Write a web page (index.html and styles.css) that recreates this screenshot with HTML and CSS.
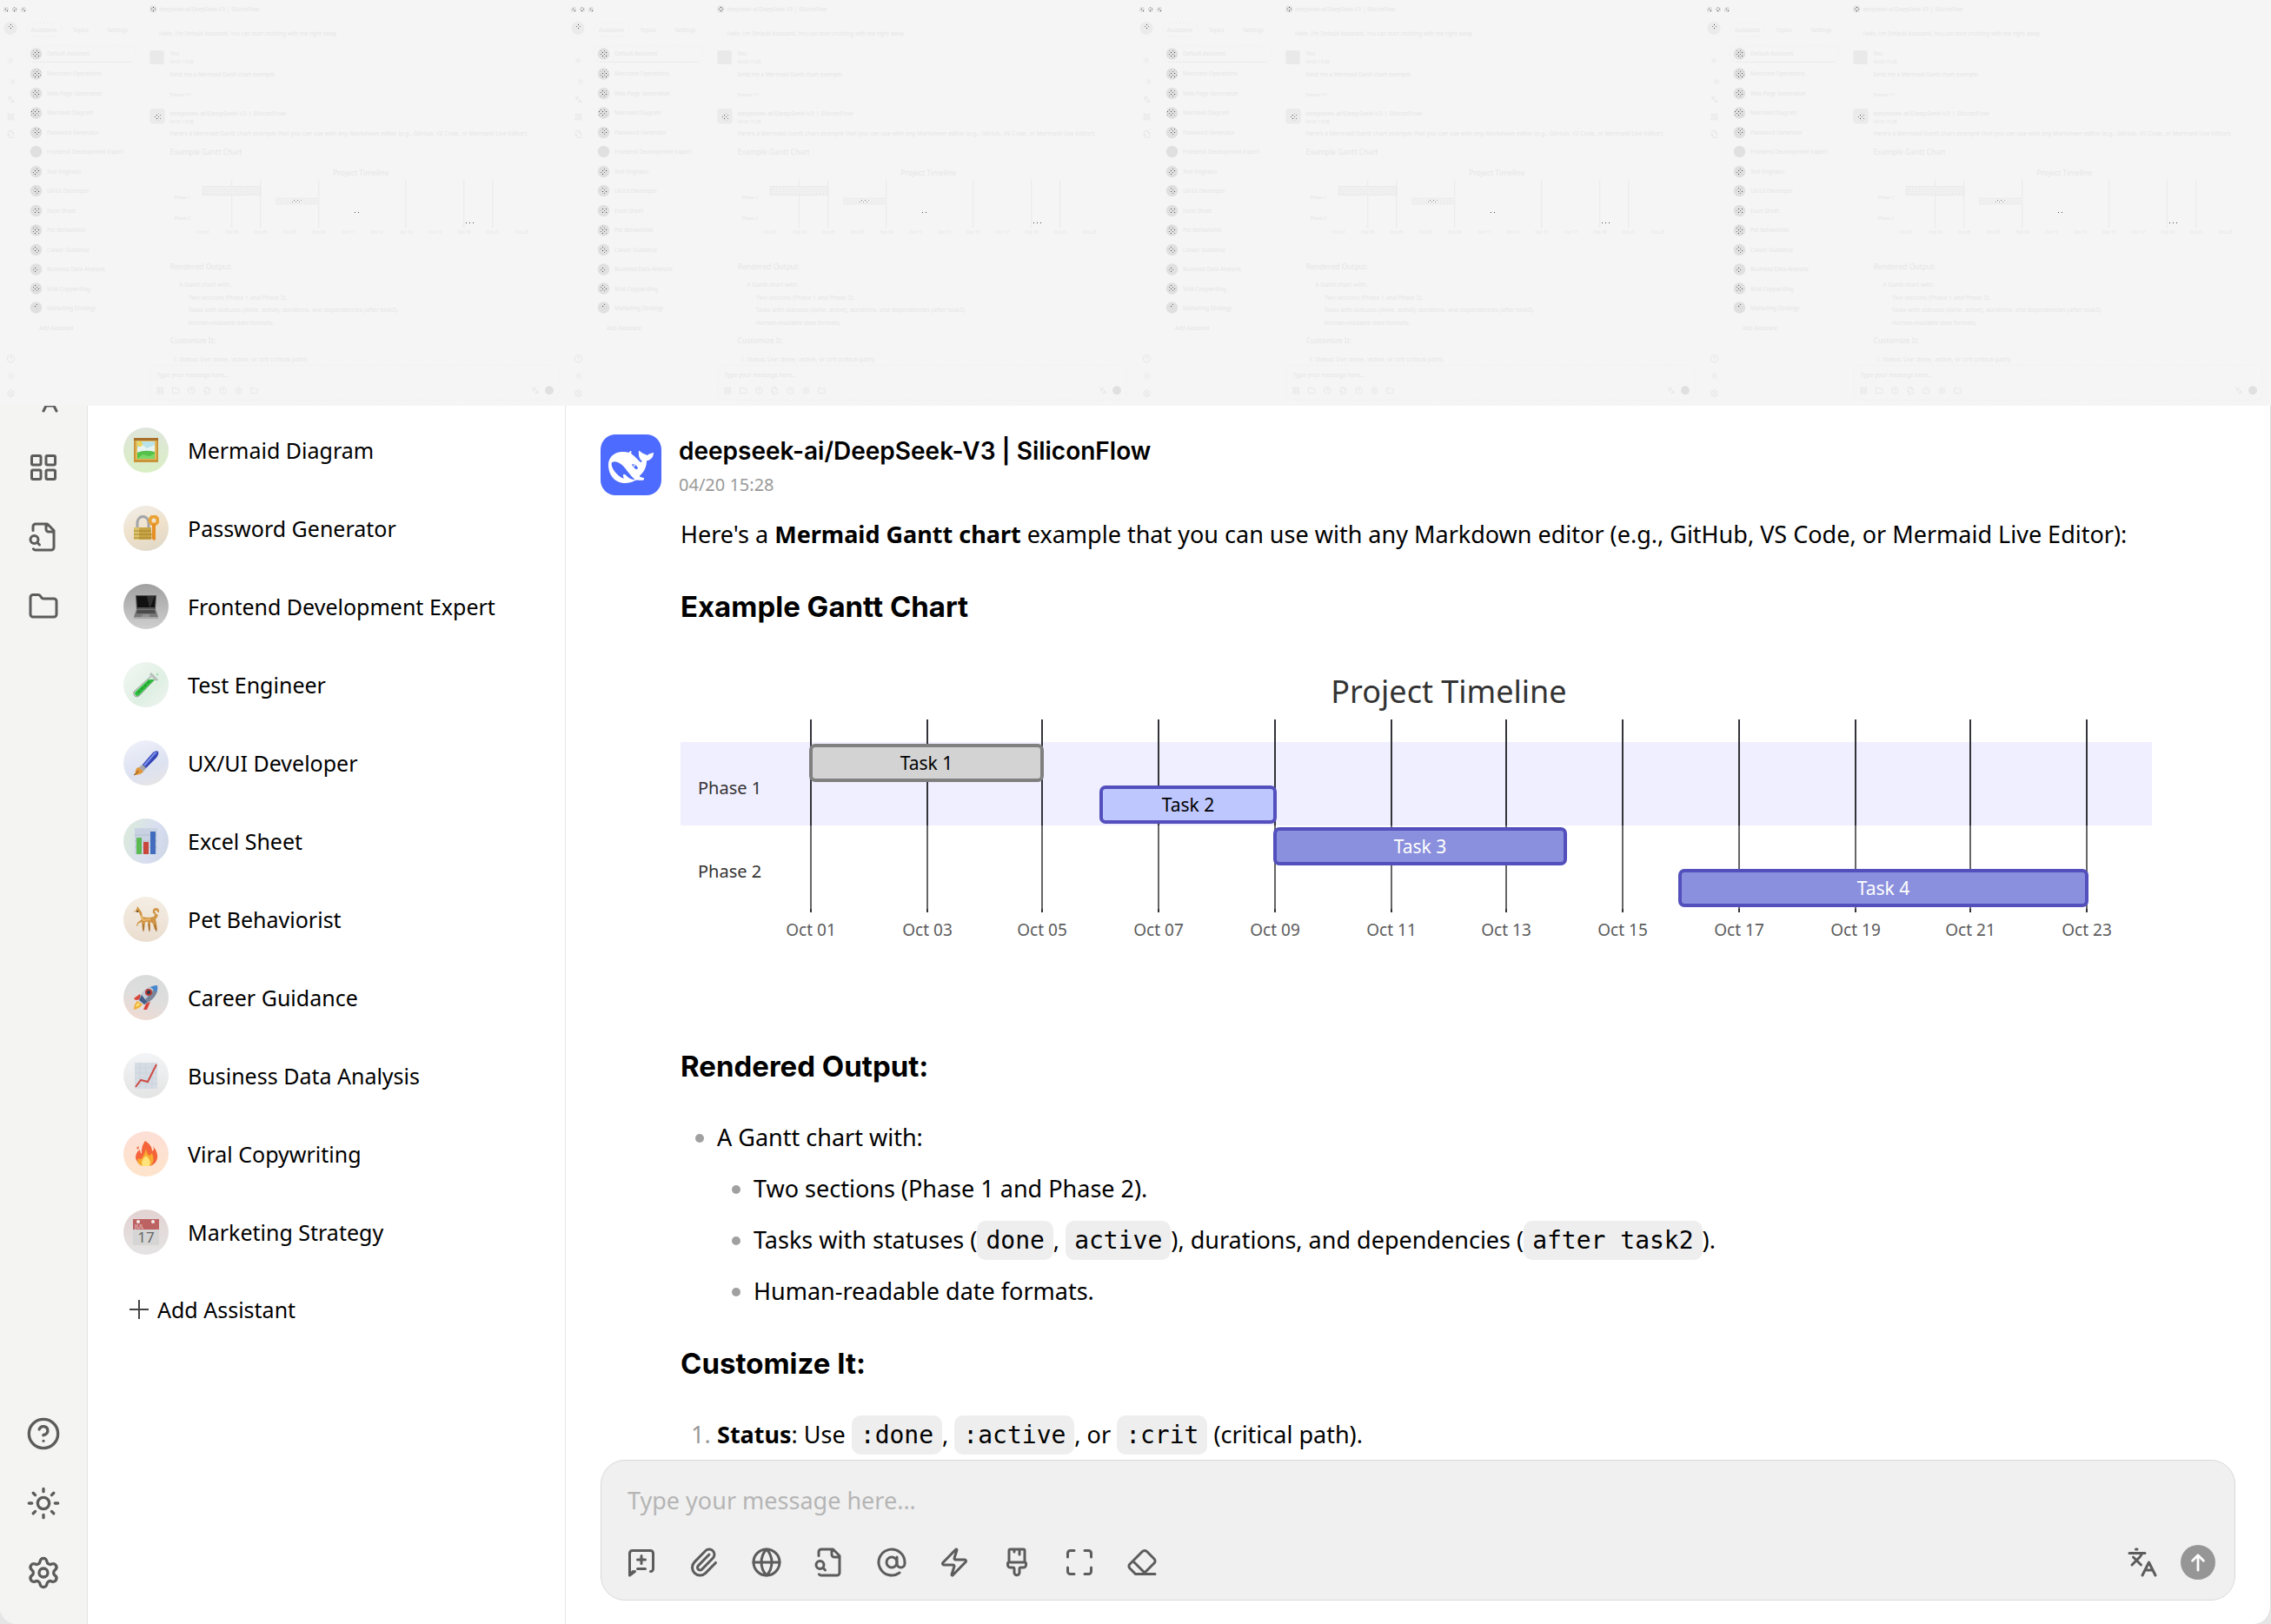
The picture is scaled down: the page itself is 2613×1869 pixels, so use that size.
FILE: index.html
```html
<!DOCTYPE html>
<html lang="en">
<head>
    <meta charset="UTF-8">
    <meta name="viewport" content="width=device-width, initial-scale=1.0">
    <title>Assistants</title>
    <link rel="stylesheet" href="styles.css">
</head>
<body>

    <!-- shared icons -->
    <svg class="defs" aria-hidden="true">
        <defs>
            <pattern id="dots" width="16" height="16" patternUnits="userSpaceOnUse">
                <rect width="4" height="4" fill="#444" shape-rendering="crispEdges"/>
                <rect x="8" y="8" width="4" height="4" fill="#777" shape-rendering="crispEdges"/>
            </pattern>
            <pattern id="mesh" width="16" height="16" patternUnits="userSpaceOnUse">
                <rect width="16" height="16" fill="#f1f1f1"/>
                <rect width="4" height="4" fill="#e2e2e2"/>
                <rect x="8" y="8" width="4" height="4" fill="#e2e2e2"/>
            </pattern>
        </defs>
        <symbol id="i-translate" viewBox="0 0 24 24"><path d="m5 8 6 6M4 14l6-6 2-3M2 5h12M7 2h1M22 22l-5-10-5 10M14 18h6"/></symbol>
        <symbol id="i-grid" viewBox="0 0 24 24"><rect x="3" y="3" width="7" height="7" rx="1"/><rect x="14" y="3" width="7" height="7" rx="1"/><rect x="14" y="14" width="7" height="7" rx="1"/><rect x="3" y="14" width="7" height="7" rx="1"/></symbol>
        <symbol id="i-filesearch" viewBox="0 0 24 24"><path d="M14 2v4a2 2 0 0 0 2 2h4M4.3 21.2A2 2 0 0 0 6 22h12a2 2 0 0 0 2-2V7l-5-5H6a2 2 0 0 0-2 2v3M9 18l-1.5-1.5"/><circle cx="5" cy="14" r="3"/></symbol>
        <symbol id="i-folder" viewBox="0 0 24 24"><path d="M20 20a2 2 0 0 0 2-2V8a2 2 0 0 0-2-2h-7.900a2 2 0 0 1-1.690-.900L9.600 3.900A2 2 0 0 0 7.930 3H4a2 2 0 0 0-2 2v13a2 2 0 0 0 2 2Z"/></symbol>
        <symbol id="i-help" viewBox="0 0 24 24"><circle cx="12" cy="12" r="10"/><path d="M9.090 9a3 3 0 0 1 5.830 1c0 2-3 3-3 3M12 17h.01"/></symbol>
        <symbol id="i-sun" viewBox="0 0 24 24"><circle cx="12" cy="12" r="4"/><path d="M12 2v2M12 20v2M4.930 4.930l1.410 1.410M17.660 17.660l1.410 1.410M2 12h2M20 12h2M6.340 17.660l-1.410 1.410M19.070 4.930l-1.410 1.410"/></symbol>
        <symbol id="i-gear" viewBox="0 0 24 24"><path d="M9.670 4.140a2.340 2.340 0 0 1 4.660 0 2.340 2.340 0 0 0 3.320 1.910 2.340 2.340 0 0 1 2.330 4.030 2.340 2.340 0 0 0 0 3.840 2.340 2.340 0 0 1-2.330 4.030 2.340 2.340 0 0 0-3.320 1.910 2.340 2.340 0 0 1-4.660 0 2.340 2.340 0 0 0-3.320-1.910 2.340 2.340 0 0 1-2.330-4.030 2.340 2.340 0 0 0 0-3.840 2.340 2.340 0 0 1 2.330-4.030 2.340 2.340 0 0 0 3.320-1.910"/><circle cx="12" cy="12" r="3"/></symbol>
    </svg>

    <!-- the window is drawn once at full size and scaled down by the viewBox -->
    <header class="ghosts" aria-hidden="true">
        <svg class="ghost" viewBox="0 0 2613 1869"><g id="ghost">
            <g fill="#e0e0e0">
                <circle cx="28" cy="44" r="12"/><circle cx="68" cy="44" r="12"/><circle cx="108" cy="44" r="12"/>
                <circle cx="48" cy="130" r="30" fill="#ebebeb"/>
                <circle cx="705" cy="42" r="16"/>
                <circle cx="166" cy="248" r="27"/><circle cx="166" cy="340" r="27"/><circle cx="166" cy="430" r="27"/>
                <circle cx="166" cy="520" r="27"/><circle cx="166" cy="610" r="27"/><circle cx="166" cy="698" r="27"/>
                <circle cx="166" cy="790" r="27"/><circle cx="166" cy="878" r="27"/><circle cx="166" cy="970" r="27"/>
                <circle cx="166" cy="1060" r="27"/><circle cx="166" cy="1150" r="27"/><circle cx="166" cy="1240" r="27"/>
                <circle cx="166" cy="1328" r="27"/><circle cx="166" cy="1416" r="27"/>
                <circle cx="2528" cy="1797" r="20"/>
                <rect x="689" y="232" width="66" height="64" rx="8" fill="#e9e9e9"/>
                <rect x="689" y="500" width="70" height="70" rx="16" fill="#ebebeb"/>
                <rect x="148" y="284" width="456" height="3" fill="#e8e8e8"/>
            </g>
            <g fill="url(#dots)">
                <circle cx="28" cy="44" r="10"/><circle cx="68" cy="44" r="10"/><circle cx="108" cy="44" r="10"/>
                <circle cx="166" cy="248" r="19"/><circle cx="170" cy="340" r="19"/><circle cx="166" cy="430" r="17"/>
                <circle cx="162" cy="520" r="19"/><circle cx="170" cy="608" r="17"/><circle cx="166" cy="790" r="15"/>
                <circle cx="168" cy="878" r="14"/><circle cx="168" cy="970" r="14"/><circle cx="166" cy="1060" r="18"/>
                <circle cx="166" cy="1150" r="14"/><circle cx="164" cy="1240" r="12"/><circle cx="166" cy="1328" r="16"/>
                <circle cx="166" cy="1408" r="10"/><circle cx="48" cy="124" r="12"/><circle cx="704" cy="42" r="12"/>
                <circle cx="724" cy="538" r="16"/>
            </g>
            <g class="ghost-text">
                <text x="143" y="147">Assistants</text><text x="334" y="147">Topics</text><text x="494" y="147">Settings</text>
                <text x="732" y="50">deepseek-ai/DeepSeek-V3 | SiliconFlow</text>
                <text x="732" y="163">Hello, I'm Default Assistant. You can start chatting with me right away</text>
                <text x="216" y="257">Default Assistant</text>
                <text x="216" y="349">Merchant Operations</text>
                <text x="216" y="439">Web Page Generation</text>
                <text x="216" y="529">Mermaid Diagram</text>
                <text x="216" y="619">Password Generator</text>
                <text x="216" y="709">Frontend Development Expert</text>
                <text x="216" y="799">Test Engineer</text>
                <text x="216" y="889">UX/UI Developer</text>
                <text x="216" y="979">Excel Sheet</text>
                <text x="216" y="1069">Pet Behaviorist</text>
                <text x="216" y="1159">Career Guidance</text>
                <text x="216" y="1249">Business Data Analysis</text>
                <text x="216" y="1339">Viral Copywriting</text>
                <text x="216" y="1429">Marketing Strategy</text>
                <text x="180" y="1518">Add Assistant</text>
                <text x="781" y="257">You</text><text class="small" x="781" y="292">04/20 15:28</text>
                <text x="781" y="352">Send me a Mermaid Gantt chart example.</text>
                <text class="small" x="781" y="443">Tokens: 11</text>
                <text class="name" x="781" y="530">deepseek-ai/DeepSeek-V3 | SiliconFlow</text>
                <text class="small" x="781" y="566">04/20 15:28</text>
                <text class="body" x="783" y="624">Here's a Mermaid Gantt chart example that you can use with any Markdown editor (e.g., GitHub, VS Code, or Mermaid Live Editor):</text>
                <text class="large" x="783" y="710">Example Gantt Chart</text>
                <text class="large" x="1533" y="808">Project Timeline</text>
                <text class="small" x="803" y="915">Phase 1</text><text class="small" x="803" y="1011">Phase 2</text>
                <text class="large" x="783" y="1238">Rendered Output:</text>
                <text class="body" x="825" y="1319">A Gantt chart with:</text>
                <text class="body" x="867" y="1378">Two sections (Phase 1 and Phase 2).</text>
                <text class="body" x="867" y="1437">Tasks with statuses (done, active), durations, and dependencies (after task2).</text>
                <text class="body" x="867" y="1497">Human-readable date formats.</text>
                <text class="large" x="783" y="1581">Customize It:</text>
                <text class="body" x="797" y="1662">1. Status: Use :done, :active, or :crit (critical path).</text>
                <text class="body" x="722" y="1735">Type your message here...</text>
                <text class="small" x="904" y="1077">Oct 01</text><text class="small" x="1038" y="1077">Oct 03</text><text class="small" x="1170" y="1077">Oct 05</text>
                <text class="small" x="1304" y="1077">Oct 07</text><text class="small" x="1438" y="1077">Oct 09</text><text class="small" x="1572" y="1077">Oct 11</text>
                <text class="small" x="1704" y="1077">Oct 13</text><text class="small" x="1838" y="1077">Oct 15</text><text class="small" x="1972" y="1077">Oct 17</text>
                <text class="small" x="2106" y="1077">Oct 19</text><text class="small" x="2238" y="1077">Oct 21</text><text class="small" x="2372" y="1077">Oct 23</text>
            </g>
            <g stroke="#e9e9e9" stroke-width="4" fill="none">
                <path d="M1067 828V1050M1199 828V1050M1467 828V1050M1867 828V1050M2135 828V1050M2267 828V1050"/>
                <rect x="933" y="858" width="266" height="40" fill="url(#mesh)"/>
                <rect x="1267" y="908" width="200" height="36" fill="url(#mesh)" stroke="none"/>
            </g>
            <g fill="url(#dots)"><rect x="1344" y="918" width="42" height="12"/><rect x="1630" y="972" width="22" height="10"/><rect x="2140" y="1020" width="40" height="10"/></g>
            <g stroke="#e4e4e4" stroke-width="3" fill="none" stroke-dasharray="4 12">
                <rect x="691" y="1681" width="1880" height="161" rx="28"/>
                <rect x="124" y="106" width="160" height="62" rx="28"/>
                <rect x="122" y="212" width="500" height="72" rx="24"/>
            </g>
            <g class="ghost-icons">
                <use href="#i-sun" x="30" y="260" width="36" height="36"/>
                <use href="#i-sun" x="42" y="357" width="36" height="36"/>
                <use href="#i-translate" x="32" y="440" width="36" height="36"/>
                <use href="#i-grid" x="32" y="520" width="36" height="36"/>
                <use href="#i-filesearch" x="32" y="600" width="36" height="36"/>
                <use href="#i-help" x="30" y="1631" width="40" height="40"/>
                <use href="#i-sun" x="30" y="1711" width="40" height="40"/>
                <use href="#i-gear" x="30" y="1791" width="40" height="40"/>
                <use href="#i-grid" x="719" y="1780" width="36" height="36"/>
                <use href="#i-folder" x="791" y="1780" width="36" height="36"/>
                <use href="#i-help" x="863" y="1780" width="36" height="36"/>
                <use href="#i-filesearch" x="935" y="1780" width="36" height="36"/>
                <use href="#i-help" x="1008" y="1780" width="36" height="36"/>
                <use href="#i-gear" x="1080" y="1780" width="36" height="36"/>
                <use href="#i-folder" x="1152" y="1780" width="36" height="36"/>
                <use href="#i-translate" x="2446" y="1780" width="36" height="36"/>
            </g>
        </g></svg>
        <svg class="ghost" viewBox="0 0 2613 1869"><use href="#ghost"/></svg>
        <svg class="ghost" viewBox="0 0 2613 1869"><use href="#ghost"/></svg>
        <svg class="ghost" viewBox="0 0 2613 1869"><use href="#ghost"/></svg>
    </header>

    <div class="app">
        <nav class="rail" aria-label="Main">
            <div class="rail-top">
                <button class="rail-btn" aria-label="Translate"><svg class="icon"><use href="#i-translate"/></svg></button>
                <button class="rail-btn" aria-label="Apps"><svg class="icon"><use href="#i-grid"/></svg></button>
                <button class="rail-btn" aria-label="Knowledge"><svg class="icon"><use href="#i-filesearch"/></svg></button>
                <button class="rail-btn" aria-label="Files"><svg class="icon"><use href="#i-folder"/></svg></button>
            </div>
            <div class="rail-bottom">
                <button class="rail-btn" aria-label="Help"><svg class="icon icon-lg"><use href="#i-help"/></svg></button>
                <button class="rail-btn" aria-label="Theme"><svg class="icon icon-lg"><use href="#i-sun"/></svg></button>
                <button class="rail-btn" aria-label="Settings"><svg class="icon icon-lg"><use href="#i-gear"/></svg></button>
            </div>
        </nav>

        <aside class="assistants">
            <ul class="assistant-list">
                <li><button class="assistant"><span class="avatar av-mermaid"><svg viewBox="0 0 30 30">
                    <path d="M1 1h28v28H1z" fill="#c9953a"/><path d="M1 1h28v3H1z" fill="#a8702a"/><path d="M3 4h24v22H3z" fill="#e3b95a"/><path d="M5 5h20v20H5z" fill="#b9e3ea"/><path d="M5 13l5-5 6 5 9-4v8H5z" fill="#e8f4f2"/><circle cx="8" cy="8" r="3" fill="#ead45a"/><path d="M5 18q8-4 20-1v8H5z" fill="#55c04a"/><path d="M5 25l6-5 8 2 6-3v6z" fill="#7ad868"/>
                </svg></span>Mermaid Diagram</button></li>
                <li><button class="assistant"><span class="avatar av-lock"><svg viewBox="0 0 30 30">
                    <path d="M5 16V9a6 7 0 0 1 13 0v7" fill="none" stroke="#a3a5a8" stroke-width="3"/><path d="M1 14h20v14H1z" fill="#c9a545"/><path d="M1 14h6v14H1z" fill="#dcc46c"/><path d="M1 18h20M1 22h20M1 26h20" stroke="#a38430" stroke-width="1"/><circle cx="24" cy="6" r="4.500" fill="none" stroke="#e9a235" stroke-width="4"/><path d="M22 10h4v18l-2 1-3-3 1-2-1-2 1-2z" fill="#e58f25"/>
                </svg></span>Password Generator</button></li>
                <li><button class="assistant"><span class="avatar av-laptop"><svg viewBox="0 0 30 30">
                    <path d="M3 2h24l-1 16H4z" fill="#555"/><path d="M4 3h22l-1 13H5z" fill="#111"/><path d="M16 3h9l-5 13h-1z" fill="#303030"/><path d="M4 18h22l3 9H1z" fill="#777"/><path d="M5 19h20l1 4H4z" fill="#4b4b4b"/><path d="M11 24h8v3h-9z" fill="#929292"/><path d="M1 27h28v2H1z" fill="#a5a5a5"/>
                </svg></span>Frontend Development Expert</button></li>
                <li><button class="assistant"><span class="avatar av-tube"><svg viewBox="0 0 30 30">
                    <path d="M22 4l4 4L7 28q-3 2-5 0t-1-5z" fill="#d7e2da" stroke="#919d95" stroke-width="1"/><path d="M18 9h7L7 27q-2 2-4 0t0-4z" fill="#2fbd3e"/><path d="M6 24l14-14" stroke="#176f28" stroke-width="1" stroke-dasharray="3 2"/><path d="M20 2l8 8" stroke="#b9beba" stroke-width="3"/><circle cx="28" cy="3" r="1.500" fill="#b5dec0"/>
                </svg></span>Test Engineer</button></li>
                <li><button class="assistant"><span class="avatar av-brush"><svg viewBox="0 0 30 30">
                    <path d="M10 18L23 3q4-3 6-1 1 3-2 7L14 22z" fill="#3446b5"/><path d="M13 18L25 4l2-1" stroke="#7d90ea" stroke-width="2" fill="none"/><path d="M7 20l4-3 4 4-3 4z" fill="#a7a7ab"/><path d="M7 20l5 5q-3 4-11 4 2-2 2-5 1-4 4-4z" fill="#e0963a"/><path d="M1 29q3-1 5-5" stroke="#8b4c1b" fill="none"/>
                </svg></span>UX/UI Developer</button></li>
                <li><button class="assistant"><span class="avatar av-bars"><svg viewBox="0 0 30 30">
                    <path d="M2 0h26v30H2z" fill="#c9d2e2"/><path d="M2 8h26M2 15h26M2 22h26" stroke="#b4bed0"/><path d="M4 11h6v19H4z" fill="#5cba52"/><path d="M12 16h6v14h-6z" fill="#c9483c"/><path d="M20 4h6v26h-6z" fill="#426cbd"/>
                </svg></span>Excel Sheet</button></li>
                <li><button class="assistant"><span class="avatar av-dog"><svg viewBox="0 0 30 30">
                    <path d="M0 7l4-3 1-4 3 4 2 3 1 5q6 2 13 0l1-2q-1-3-2-5 1-4 5-2 1 2 0 3-1-2-3-1 0 1 2 4l2 1q-1 3-3 5l1 4 1 8h-3l-2-7-3-2v9h-2l-1-9h-3l-1 9h-2l-1-9-4 2-1 3H4l1-4 5-4-3-8-4-1z" fill="#cf9547"/><path d="M9 11l3 5 8-1" stroke="#e8b667" stroke-width="2" fill="none"/><path d="M12 21v8M18 20l1 9M25 21l2 8" stroke="#916027"/><path d="M24 8q-1-5 3-5 3 1 2 4" fill="none" stroke="#cf9547" stroke-width="2"/><circle cx="5" cy="6" r="1" fill="#49331d"/>
                </svg></span>Pet Behaviorist</button></li>
                <li><button class="assistant"><span class="avatar av-rocket"><svg viewBox="0 0 30 30">
                    <path d="M8 11l-7 5 2 2 7-1zM15 22l-3 7h4l4-9z" fill="#da443a"/><path d="M5 19q-4 4-4 10 6-1 10-6z" fill="#f0ae35"/><path d="M6 21q-3 2-3 5 4-1 5-3z" fill="#f9e276"/><path d="M7 18Q11 3 28 1q2 14-15 22z" fill="#78859a"/><path d="M7 18Q11 3 28 1L11 21z" fill="#c1ccd8"/><path d="M20 3q4-2 8-2 1 4-1 8z" fill="#4588cd"/><circle cx="18" cy="9" r="4" fill="#b83a34"/><circle cx="18" cy="9" r="2" fill="#26374c"/><path d="M7 18l3-6 6 8-3 3z" fill="#465e87"/>
                </svg></span>Career Guidance</button></li>
                <li><button class="assistant"><span class="avatar av-line"><svg viewBox="0 0 30 30">
                    <path d="M2 0h26v30H2z" fill="#d6dce3"/><path d="M2 6h26M2 12h26M2 18h26M2 24h26M8 0v30M15 0v30M22 0v30" stroke="#ccd3dc"/><path d="M3 28l6-8 8 2 10-20" fill="none" stroke="#ce4b45" stroke-width="2"/>
                </svg></span>Business Data Analysis</button></li>
                <li><button class="assistant"><span class="avatar av-fire"><svg viewBox="0 0 30 30">
                    <path d="M14 0q8 5 8 12l2-2q0-2-1-4 6 7 5 14-2 9-12 9T3 20q0-7 5-10 0 3 2 5Q9 7 14 0z" fill="#f4633a"/><path d="M4 8l3-2-1 4z" fill="#f4633a"/><path d="M15 9q1 6 4 8l3-3q5 15-7 15T6 20l3 1q4-4 6-12z" fill="#f9a92f"/><path d="M15 17q7 6 4 12h-8q-3-6 4-12z" fill="#fde37a"/>
                </svg></span>Viral Copywriting</button></li>
                <li><button class="assistant"><span class="avatar av-cal"><svg viewBox="0 0 30 30">
                    <path d="M0 0h30v30H0z" fill="#d5d5d5"/><path d="M0 0h30v12H0z" fill="#bd6262"/><circle cx="6" cy="3" r="2" fill="#f3eded"/><circle cx="23" cy="3" r="2" fill="#f3eded"/><text class="cal-month" x="2" y="11">JUL</text><text class="cal-day" x="15" y="27">17</text>
                </svg></span>Marketing Strategy</button></li>
            </ul>
            <button class="add-assistant"><svg viewBox="0 0 22 22"><path d="M11 0v22M0 11h22"/></svg>Add Assistant</button>
        </aside>

        <main class="chat">
            <div class="messages">
                <article class="message">
                    <header class="message-head">
                        <svg class="model-logo" viewBox="33 30 210 210" aria-hidden="true">
                            <rect x="33" y="30" width="210" height="210" rx="52" fill="#4d6bfe"/>
                            <path d="M100 91C110 89 122 91 131 93C132 89 136 87 140 87C138 92 138 95 141 98C154 106 160 117 170 125C173 127 176 124 176 121C168 116 163 104 165 86C168 85 172 93 187 98C191 102 194 103 198 99C204 94 212 95 216 92C216 108 207 118 192 121C192 140 186 155 173 168C167 173 166 175 171 177L182 180C185 184 183 188 177 188C165 189 157 185 150 190C135 199 110 202 92 192C72 183 60 160 60 135C60 110 78 94 100 91Z" fill="#fff"/>
                            <path d="M71 132C69 124 82 121 92 126C110 134 118 147 128 160C136 170 145 181 152 186C140 186 132 182 124 174C118 168 113 165 111 169C110 173 112 178 114 182C100 178 90 168 82 158C74 148 71 140 71 132Z" fill="#4d6bfe"/>
                            <path d="M141 134C147 130 161 138 162 148C158 153 151 149 149 144C146 141 143 139 141 134Z" fill="#4d6bfe"/>
                            <circle cx="149" cy="138" r="3" fill="#fff"/>
                        </svg>
                        <div>
                            <div class="model-name">deepseek-ai/DeepSeek-V3 | SiliconFlow</div>
                            <time class="message-time">04/20 15:28</time>
                        </div>
                    </header>

                    <div class="markdown">
                        <p>Here's a <strong>Mermaid Gantt chart</strong> example that you can use with any Markdown editor (e.g., GitHub, VS Code, or Mermaid Live Editor):</p>
                        <h3>Example Gantt Chart</h3>

                        <svg class="gantt" viewBox="0 0 1693 340" role="img" aria-label="Project Timeline">
                            <rect x="0" y="104" width="1693" height="96" fill="#f0efff"/>
                            <text class="gantt-title" x="884" y="59">Project Timeline</text>
                            <path class="gantt-grid" d="M150 78V296M284 78V296M416 78V296M550 78V296M684 78V296M818 78V296M950 78V296M1084 78V296M1218 78V296M1352 78V296M1484 78V296M1618 78V296"/>
                            <path class="gantt-grid dark" d="M150 78V200M284 78V200M416 78V200M550 78V200M684 78V200M818 78V200M950 78V200M1084 78V200M1218 78V200M1352 78V200M1484 78V200M1618 78V200M150 296v4M284 296v4M416 296v4M550 296v4M684 296v4M818 296v4M950 296v4M1084 296v4M1218 296v4M1352 296v4M1484 296v4M1618 296v4"/>
                            <text class="gantt-section" x="20" y="164">Phase 1</text>
                            <text class="gantt-section" x="20" y="260">Phase 2</text>
                            <g class="task done"><rect x="150" y="108" width="266" height="40" rx="5"/><text x="283" y="136">Task 1</text></g>
                            <g class="task active"><rect x="484" y="156" width="200" height="40" rx="5"/><text x="584" y="184">Task 2</text></g>
                            <g class="task"><rect x="684" y="204" width="334" height="40" rx="5"/><text x="851" y="232">Task 3</text></g>
                            <g class="task"><rect x="1150" y="252" width="468" height="40" rx="5"/><text x="1384" y="280">Task 4</text></g>
                            <g class="gantt-ticks">
                                <text x="150" y="327">Oct 01</text><text x="284" y="327">Oct 03</text><text x="416" y="327">Oct 05</text>
                                <text x="550" y="327">Oct 07</text><text x="684" y="327">Oct 09</text><text x="818" y="327">Oct 11</text>
                                <text x="950" y="327">Oct 13</text><text x="1084" y="327">Oct 15</text><text x="1218" y="327">Oct 17</text>
                                <text x="1352" y="327">Oct 19</text><text x="1484" y="327">Oct 21</text><text x="1618" y="327">Oct 23</text>
                            </g>
                        </svg>

                        <h3>Rendered Output:</h3>
                        <ul>
                            <li>A Gantt chart with:
                                <ul>
                                    <li>Two sections (Phase 1 and Phase 2).</li>
                                    <li>Tasks with statuses (<code>done</code>, <code>active</code>), durations, and dependencies (<code>after task2</code>).</li>
                                    <li>Human-readable date formats.</li>
                                </ul>
                            </li>
                        </ul>
                        <h3>Customize It:</h3>
                        <ol>
                            <li><strong>Status</strong>: Use <code>:done</code>, <code>:active</code>, or <code>:crit</code> (critical path).</li>
                        </ol>
                    </div>
                </article>
            </div>

            <form class="composer">
                <input class="composer-input" type="text" aria-label="Message" placeholder="Type your message here...">
                <div class="toolbar">
                    <div class="tools">
                        <button type="button" class="tool" aria-label="New topic"><svg class="icon" viewBox="0 0 24 24"><path d="M21 15v2a2 2 0 0 1-2 2M7 19l-4 3V5a2 2 0 0 1 2-2h14a2 2 0 0 1 2 2v12M3 22l2.500-3M12 7v6M9 10h6M9 17h6" class="no-join"/></svg></button>
                        <button type="button" class="tool" aria-label="Attach"><svg class="icon" viewBox="0 0 24 24"><path d="M13.230 20.250 21 12.300M16 6l-8.410 8.590a2 2 0 0 0 0 2.820 2 2 0 0 0 2.820 0l8.410-8.580a4 4 0 0 0 0-5.660 4 4 0 0 0-5.650 0l-8.400 8.580a6 6 0 0 0 0 8.500 6 6 0 0 0 8.480 0"/></svg></button>
                        <button type="button" class="tool" aria-label="Web search"><svg class="icon" viewBox="0 0 24 24"><circle cx="12" cy="12" r="10"/><path d="M12 2a14.500 14.500 0 0 0 0 20 14.500 14.500 0 0 0 0-20M2 12h20"/></svg></button>
                        <button type="button" class="tool" aria-label="Knowledge base"><svg class="icon"><use href="#i-filesearch"/></svg></button>
                        <button type="button" class="tool" aria-label="Mention model"><svg class="icon" viewBox="0 0 24 24"><circle cx="12" cy="12" r="4"/><path d="M16 8v5a3 3 0 0 0 6 0v-1a10 10 0 1 0-4 8"/></svg></button>
                        <button type="button" class="tool" aria-label="Quick phrases"><svg class="icon" viewBox="0 0 24 24"><path d="M4 14a1 1 0 0 1-.780-1.630l9.900-10.200a.5.5 0 0 1 .860.460l-1.920 6.020A1 1 0 0 0 13 10h7a1 1 0 0 1 .780 1.630l-9.900 10.200a.5.5 0 0 1-.860-.460l1.920-6.020A1 1 0 0 0 11 14z"/></svg></button>
                        <button type="button" class="tool" aria-label="Clear messages"><svg class="icon" viewBox="0 0 24 24"><path d="M10 2v2M14 2v4M17 2a1 1 0 0 1 1 1v9H6V3a1 1 0 0 1 1-1zM6 12a1 1 0 0 0-1 1v1a2 2 0 0 0 2 2h2a1 1 0 0 1 1 1v2.900a2 2 0 1 0 4 0V17a1 1 0 0 1 1-1h2a2 2 0 0 0 2-2v-1a1 1 0 0 0-1-1"/></svg></button>
                        <button type="button" class="tool" aria-label="Expand"><svg class="icon" viewBox="0 0 24 24"><path d="M8 3H5a2 2 0 0 0-2 2v3M21 8V5a2 2 0 0 0-2-2h-3M3 16v3a2 2 0 0 0 2 2h3M16 21h3a2 2 0 0 0 2-2v-3"/></svg></button>
                        <button type="button" class="tool" aria-label="Clear context"><svg class="icon" viewBox="0 0 24 24"><path d="m7 21-4.300-4.300c-1-1-1-2.500 0-3.400l9.600-9.600c1-1 2.500-1 3.400 0l5.600 5.600c1 1 1 2.500 0 3.400L13 21M22 21H7M5 11l9 9"/></svg></button>
                    </div>
                    <div class="actions">
                        <button type="button" class="tool" aria-label="Translate"><svg class="icon"><use href="#i-translate"/></svg></button>
                        <button type="submit" class="send" aria-label="Send"><svg viewBox="0 0 24 24"><path d="M5 10l7-7 7 7M12 3v19"/></svg></button>
                    </div>
                </div>
            </form>
        </main>
    </div>

</body>
</html>
```

FILE: styles.css
```css
* {
    box-sizing: border-box;
}
body {
    margin: 0;
    height: 100vh;
    display: flex;
    flex-direction: column;
    overflow: hidden;
    background: #e6e6e6;
    color: #000;
    font-family: "Noto Sans", sans-serif;
    font-size: 25px;
}
button {
    padding: 0;
    border: none;
    background: none;
    color: inherit;
    font: inherit;
    cursor: pointer;
}
ul, ol {
    margin: 0;
    padding: 0;
    list-style: none;
}
.defs {
    position: absolute;
    width: 0;
    height: 0;
}
.icon {
    display: block;
    width: 36px;
    height: 36px;
    fill: none;
    stroke: #5c5c5c;
    stroke-width: 2;
    stroke-linecap: round;
    stroke-linejoin: round;
}
.icon-lg {
    width: 40px;
    height: 40px;
}

/* faded windows along the top */
.ghosts {
    display: grid;
    grid-template-columns: repeat(4, 1fr);
    background: #f5f5f5;
}
.ghost {
    display: block;
    width: 100%;
}
.ghost-text {
    fill: #e5e5e5;
    font-size: 25px;
}
.ghost-text .small {
    font-size: 20px;
}
.ghost-text .body {
    font-size: 27px;
}
.ghost-text .name {
    font-size: 29px;
}
.ghost-text .large {
    font-size: 34px;
}
.ghost-icons {
    fill: none;
    stroke: #e2e2e2;
    stroke-width: 2;
}

.app {
    flex: 1;
    min-height: 0;
    display: flex;
    overflow: hidden;
    background: #fff;
    border-right: 1px solid #dcdcdc;
    border-radius: 0 0 20px 20px;
}

/* left rail */
.rail {
    flex: none;
    width: 101px;
    display: flex;
    flex-direction: column;
    justify-content: space-between;
    padding-bottom: 19px;
    overflow: hidden;
    background: #f4f4f2;
    border-right: 1px solid #e3e3e3;
}
.rail-top {
    margin-top: -49px;
}
.rail-btn {
    width: 100px;
    height: 80px;
    display: flex;
    align-items: center;
    justify-content: center;
}

/* assistants */
.assistants {
    flex: none;
    width: 550px;
    padding: 6px 41px;
    border-right: 1px solid #e6e6e6;
}
.assistant {
    width: 100%;
    height: 90px;
    display: flex;
    align-items: center;
    gap: 22px;
    text-align: left;
}
.avatar {
    width: 52px;
    height: 52px;
    display: flex;
    align-items: center;
    justify-content: center;
    border-radius: 50%;
}
.avatar svg {
    width: 30px;
    height: 30px;
}
.av-mermaid { background: linear-gradient(#dfe5dc, #d9efc4); }
.av-lock { background: linear-gradient(160deg, #f0eeeb, #f0e2cc, #dcd6c6); }
.av-laptop { background: linear-gradient(#a0a0a0, #cfcfcf); }
.av-tube { background: linear-gradient(135deg, #f4f7f5, #dff0e3 60%, #f0f4f1); }
.av-brush { background: linear-gradient(160deg, #f0f2fa, #dde2f1 60%, #e8e6e3); }
.av-bars { background: linear-gradient(110deg, #dcecd9, #d8def0 60%, #ccd5e4); }
.av-dog { background: linear-gradient(#f5eee4, #eaddcf); }
.av-rocket { background: linear-gradient(200deg, #d9dadb, #dedede 50%, #f3d9cf); }
.av-line { background: linear-gradient(#f3f4f6, #e4e4e4); }
.av-fire { background: linear-gradient(#fddfd6, #fee4cb); }
.av-cal { background: linear-gradient(#e3d2d2, #e4e4e4); }
.cal-month {
    fill: #f0dada;
    font-size: 7px;
}
.cal-day {
    fill: #666;
    font-size: 17px;
    text-anchor: middle;
}
.add-assistant {
    height: 88px;
    display: flex;
    align-items: center;
    gap: 10px;
    padding-left: 7px;
}
.add-assistant svg {
    width: 22px;
    height: 22px;
    stroke: #444;
    stroke-width: 2;
}

/* chat */
.chat {
    flex: 1;
    min-width: 0;
    display: flex;
    flex-direction: column;
    padding: 0 40px 27px;
}
.messages {
    flex: 1;
    min-height: 0;
    overflow: hidden;
}
.message {
    padding: 33px 96px 0 0;
}
.message-head {
    display: flex;
    gap: 20px;
}
.model-logo {
    width: 70px;
    height: 70px;
}
.model-name {
    font: 600 28px/38px Inter, sans-serif;
}
.message-time {
    display: block;
    color: #999;
    font-size: 20px;
    line-height: 40px;
}
.markdown {
    padding-left: 92px;
    font-size: 27px;
    line-height: 46px;
}
.markdown p {
    margin: 14px 0 37px;
}
.markdown h3 {
    margin: 0;
    font: 700 33px/46px Inter, sans-serif;
}
.markdown li {
    position: relative;
    margin-bottom: 13px;
    padding-left: 42px;
}
.markdown > ul, .markdown > ol {
    margin-top: 36px;
}
.markdown ul ul {
    margin-top: 13px;
}
.markdown > ul {
    margin-bottom: 37px;
}
.markdown > ul > li, .markdown ul ul li:last-child {
    margin-bottom: 0;
}
.markdown li::before {
    content: "";
    position: absolute;
    top: 19px;
    left: 17px;
    width: 10px;
    height: 10px;
    border-radius: 50%;
    background: #a0a0a0;
}
.markdown ol {
    counter-reset: item;
}
.markdown ol li {
    counter-increment: item;
}
.markdown ol li::before {
    content: counter(item) ".";
    top: 0;
    left: 12px;
    width: auto;
    height: auto;
    background: none;
    color: #999;
}
code {
    padding: 6px 10px;
    border-radius: 10px;
    background: #eee;
    font-family: "DejaVu Sans Mono", monospace;
    font-size: 28px;
    line-height: 32px;
}

/* gantt chart */
.gantt {
    display: block;
    width: 100%;
    margin: 29px 0 114px;
    fill: #333;
}
.gantt-title {
    font-size: 36px;
    text-anchor: middle;
}
.gantt-grid {
    stroke: #666;
    stroke-width: 2;
}
.gantt-grid.dark {
    stroke: #33333a;
}
.gantt-section {
    font-size: 20px;
}
.gantt-ticks {
    fill: #5c5c5c;
    font-size: 19px;
    text-anchor: middle;
}
.task rect {
    fill: #8a90dd;
    stroke: #534fbc;
    stroke-width: 4;
}
.task text {
    fill: #fff;
    font-size: 21px;
    text-anchor: middle;
}
.task.done rect {
    fill: #d3d3d3;
    stroke: #808080;
}
.task.active rect {
    fill: #bfc7ff;
}
.task.done text, .task.active text {
    fill: #000;
}

/* composer */
.composer {
    padding: 20px 22px 23px 28px;
    background: #f0f0f0;
    border: 1px solid #d9d9d9;
    border-radius: 28px;
}
.composer-input {
    display: block;
    width: 100%;
    height: 50px;
    padding: 0 2px;
    border: none;
    outline: none;
    background: none;
    font: inherit;
    font-size: 27px;
}
.composer-input::placeholder {
    color: #b5b5b5;
}
.toolbar {
    display: flex;
    align-items: center;
    justify-content: space-between;
    margin-top: 27px;
}
.tools {
    display: flex;
    gap: 36px;
}
.actions {
    display: flex;
    align-items: center;
    gap: 26px;
}
.tool {
    width: 36px;
    height: 36px;
}
.send {
    width: 40px;
    height: 40px;
    display: flex;
    align-items: center;
    justify-content: center;
    border-radius: 50%;
    background: #969696;
}
.send svg {
    width: 22px;
    height: 22px;
    fill: none;
    stroke: #fff;
    stroke-width: 3;
    stroke-linecap: round;
    stroke-linejoin: round;
}
```
